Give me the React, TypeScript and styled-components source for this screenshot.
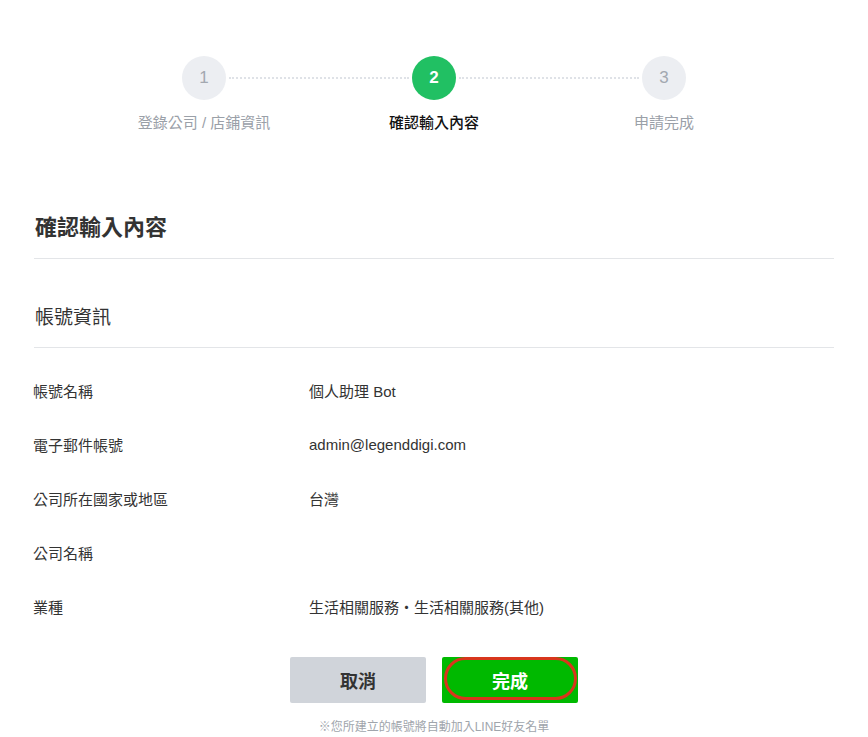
import React from "react";
import styled, { createGlobalStyle } from "styled-components";

const steps = ["登錄公司 / 店鋪資訊", "確認輸入內容", "申請完成"];
const current = 1;

const rows = [
  { label: "帳號名稱", value: "個人助理 Bot" },
  { label: "電子郵件帳號", value: "admin@legenddigi.com" },
  { label: "公司所在國家或地區", value: "台灣" },
  { label: "公司名稱", value: "" },
  { label: "業種", value: "生活相關服務・生活相關服務(其他)" },
];

export default function App() {
  return (
    <>
      <GlobalStyle />
      <Page>
        <Stepper>
          {steps.map((s, i) => (
            <Step key={s} $last={i === steps.length - 1}>
              <Circle $active={i === current}>{i + 1}</Circle>
              <StepLabel $active={i === current}>{s}</StepLabel>
            </Step>
          ))}
        </Stepper>

        <Content>
          <Title>確認輸入內容</Title>
          <SectionTitle>帳號資訊</SectionTitle>
          <Rows>
            {rows.map((r) => (
              <Row key={r.label}>
                <Label>{r.label}</Label>
                <Value>{r.value}</Value>
              </Row>
            ))}
          </Rows>
        </Content>

        <Buttons>
          <Button $variant="cancel">取消</Button>
          <Button $variant="primary">
            完成
            <Mark />
          </Button>
        </Buttons>
        <Note>※您所建立的帳號將自動加入LINE好友名單</Note>
      </Page>
    </>
  );
}

const GlobalStyle = createGlobalStyle`
  body {
    margin: 0;
    background: #fff;
    font-family: "Liberation Sans", "Noto Sans CJK TC", sans-serif;
    color: #333;
  }
`;

const Page = styled.div`
  width: 868px;
  min-height: 737px;
  overflow: hidden;
`;

const Stepper = styled.div`
  display: flex;
  justify-content: center;
  padding-top: 56px;
`;

const Step = styled.div<{ $last?: boolean }>`
  position: relative;
  width: 230px;
  display: flex;
  flex-direction: column;
  align-items: center;
  &::after {
    content: "";
    display: ${(p) => (p.$last ? "none" : "block")};
    position: absolute;
    top: 21px;
    left: calc(50% + 25px);
    width: calc(100% - 50px);
    border-top: 2px dotted #dfe2e7;
  }
`;

const Circle = styled.div<{ $active?: boolean }>`
  width: 44px;
  height: 44px;
  border-radius: 50%;
  display: flex;
  align-items: center;
  justify-content: center;
  font-size: 17px;
  font-weight: ${(p) => (p.$active ? 700 : 400)};
  background: ${(p) => (p.$active ? "#21c063" : "#eceef2")};
  color: ${(p) => (p.$active ? "#fff" : "#a3a8b0")};
`;

const StepLabel = styled.div<{ $active?: boolean }>`
  margin-top: 12px;
  font-size: 15px;
  line-height: 22px;
  white-space: nowrap;
  color: ${(p) => (p.$active ? "#111" : "#9aa0a8")};
  font-weight: ${(p) => (p.$active ? 500 : 400)};
`;

const Content = styled.div`
  width: 800px;
  margin: 0 auto;
  padding-top: 79px;
`;

const Title = styled.h1`
  margin: 0;
  padding: 0 0 15px 1px;
  font-size: 22px;
  line-height: 30px;
  font-weight: 600;
  color: #333;
  border-bottom: 1px solid #e3e5e8;
`;

const SectionTitle = styled.h2`
  margin: 0;
  padding: 45px 0 15px 1px;
  font-size: 19px;
  line-height: 28px;
  font-weight: 400;
  color: #333;
  border-bottom: 1px solid #e3e5e8;
`;

const Rows = styled.div`
  padding-top: 15px;
`;

const Row = styled.div`
  display: grid;
  grid-template-columns: 276px 1fr;
  height: 54px;
  align-items: center;
  margin-left: -1px;
`;

const Label = styled.div`
  font-size: 15px;
  color: #333;
`;

const Value = styled.div`
  font-size: 15px;
  color: #333;
`;

const Buttons = styled.div`
  display: flex;
  justify-content: center;
  gap: 16px;
  margin-top: 24px;
`;

const Button = styled.div<{ $variant: "cancel" | "primary" }>`
  position: relative;
  width: 136px;
  height: 46px;
  display: flex;
  align-items: center;
  justify-content: center;
  border-radius: 2px;
  font-size: 18px;
  font-weight: 700;
  background: ${(p) => (p.$variant === "primary" ? "#00b900" : "#d0d4da")};
  color: ${(p) => (p.$variant === "primary" ? "#fff" : "#333")};
`;

const Mark = styled.span`
  position: absolute;
  left: 2px;
  right: 1px;
  top: 0;
  bottom: 3px;
  border: 3px solid #d8361c;
  border-radius: 22px;
`;

const Note = styled.div`
  margin-top: 16px;
  text-align: center;
  font-size: 12px;
  line-height: 16px;
  color: #a0a5ac;
`;
